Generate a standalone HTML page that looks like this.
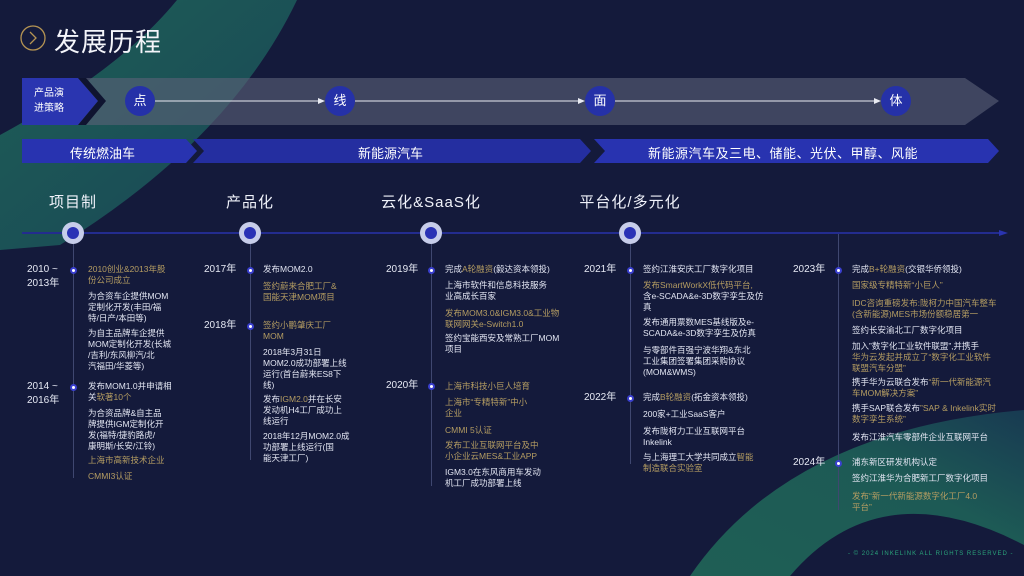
<!DOCTYPE html>
<html><head><meta charset="utf-8"><style>
*{margin:0;padding:0;box-sizing:border-box}
body{width:1024px;height:576px;overflow:hidden;background:#141a3b;font-family:"Liberation Sans","Noto Sans CJK SC",sans-serif;color:#e6e9f4;position:relative}
.a{position:absolute}
.t{position:absolute;font-size:8.5px;line-height:11px;color:#e2e5f2;white-space:nowrap}
.g{color:#b59d62}
.yr{position:absolute;font-size:10px;line-height:14px;color:#e6e9f4}
.dot{position:absolute;width:7px;height:7px;border-radius:50%;background:#fff;border:2px solid #3a3fcf}
.vl{position:absolute;width:1px;background:#3f4770}
.hd{position:absolute;top:191px;font-size:15px;color:#f0f2fa;transform:translateX(-50%);white-space:nowrap;letter-spacing:1px}
.cir{position:absolute;top:222px;width:22px;height:22px;border-radius:50%;background:#c7cdea;transform:translateX(-50%)}
.cir:after{content:"";position:absolute;left:5px;top:5px;width:12px;height:12px;border-radius:50%;background:#2a32b5}
.pc{position:absolute;top:86px;width:30px;height:30px;border-radius:50%;background:#2531a8;color:#fff;font-size:13px;text-align:center;line-height:30px;transform:translateX(-50%)}
</style></head><body>
<svg class="a" style="left:0;top:0" width="1024" height="576">
<defs>
<linearGradient id="g1" x1="0" y1="0" x2="1" y2="1"><stop offset="0" stop-color="#1f6b5c"/><stop offset="1" stop-color="#1a4c5a"/></linearGradient>
<linearGradient id="g2" x1="0" y1="1" x2="1" y2="0"><stop offset="0" stop-color="#1f5f55"/><stop offset="0.6" stop-color="#1d5a55"/><stop offset="1" stop-color="#183a52"/></linearGradient>
</defs>
<path d="M177,0 L297,0 Q230,140 60,245 L0,250 L0,135 Q120,70 177,0 Z" fill="url(#g1)" opacity="0.85"/>
<path d="M690,576 Q790,430 1024,410 L1024,576 Z" fill="url(#g2)"/>
<path d="M790,576 Q880,470 1024,545 L1024,576 Z" fill="#141a3b"/>
<path d="M22,78 L965,78 L999,101 L965,125 L22,125 Z" fill="#5a6178" opacity="0.62"/>
<path d="M22,78 L78,78 L98,101 L78,125 L22,125 Z" fill="#2a35b0"/>
<path d="M78,78 L86,78 L106,101 L86,125 L78,125 L98,101 Z" fill="#0f1430"/>
<g stroke="#e8eaf2" stroke-width="1"><line x1="155" y1="101" x2="320" y2="101"/><line x1="355" y1="101" x2="580" y2="101"/><line x1="615" y1="101" x2="876" y2="101"/></g>
<g fill="#e8eaf2"><path d="M325,101 L318,98 L318,104Z"/><path d="M585,101 L578,98 L578,104Z"/><path d="M881,101 L874,98 L874,104Z"/></g>
<path d="M22,139 L186,139 L197,151 L186,163 L22,163 Z" fill="#2833b0"/>
<path d="M193,139 L580,139 L591,151 L580,163 L193,163 L204,151 Z" fill="#242ea0"/>
<path d="M594,139 L988,139 L999,151 L988,163 L594,163 L605,151 Z" fill="#2833b0"/>
<line x1="22" y1="233" x2="1000" y2="233" stroke="#232c8f" stroke-width="2"/>
<path d="M1008,233 L999,230 L999,236Z" fill="#2a34b0"/>
<circle cx="33" cy="38" r="12" fill="none" stroke="#b59453" stroke-width="1.3"/>
<path d="M30,32 L36,38 L30,44" fill="none" stroke="#b59453" stroke-width="1.3"/>
</svg>
<div class="a" style="left:54px;top:22px;font-size:26px;color:#f4f5fa;letter-spacing:1px">发展历程</div>
<div class="a" style="left:34px;top:86px;font-size:10px;line-height:15px;color:#fff">产品演<br>进策略</div>
<div class="pc" style="left:140px">点</div><div class="pc" style="left:340px">线</div><div class="pc" style="left:600px">面</div><div class="pc" style="left:896px">体</div>
<div class="a" style="left:70px;top:143px;font-size:13px;color:#fff">传统燃油车</div>
<div class="a" style="left:358px;top:143px;font-size:13px;color:#fff">新能源汽车</div>
<div class="a" style="left:648px;top:143px;font-size:13px;color:#fff;letter-spacing:0.5px">新能源汽车及三电、储能、光伏、甲醇、风能</div>
<div class="hd" style="left:73px">项目制</div><div class="hd" style="left:250px">产品化</div><div class="hd" style="left:431px">云化&amp;SaaS化</div><div class="hd" style="left:630px">平台化/多元化</div>
<div class="vl" style="left:73px;top:244px;height:234px"></div>
<div class="vl" style="left:250px;top:244px;height:216px"></div>
<div class="vl" style="left:431px;top:244px;height:242px"></div>
<div class="vl" style="left:630px;top:244px;height:220px"></div>
<div class="vl" style="left:838px;top:234px;height:276px"></div>
<div class="cir" style="left:73px"></div><div class="cir" style="left:250px"></div><div class="cir" style="left:431px"></div><div class="cir" style="left:630px"></div>

<div class="yr" style="left:27px;top:263px">2010 ~<br>2013年</div><div class="dot" style="left:70px;top:267px"></div>
<div class="t g" style="left:88px;top:264px">2010创业&amp;2013年股<br>份公司成立</div>
<div class="t" style="left:88px;top:291px">为合资车企提供MOM<br>定制化开发(丰田/福<br>特/日产/本田等)</div>
<div class="t" style="left:88px;top:328px">为自主品牌车企提供<br>MOM定制化开发(长城<br>/吉利/东风柳汽/北<br>汽福田/华菱等)</div>
<div class="yr" style="left:27px;top:380px">2014 ~<br>2016年</div><div class="dot" style="left:70px;top:384px"></div>
<div class="t" style="left:88px;top:381px">发布MOM1.0并申请相<br>关<span class="g">软著10个</span></div>
<div class="t" style="left:88px;top:408px">为合资品牌&amp;自主品<br>牌提供IGM定制化开<br>发(福特/捷豹路虎/<br>康明斯/长安/江铃)</div>
<div class="t g" style="left:88px;top:455px">上海市高新技术企业</div>
<div class="t g" style="left:88px;top:471px">CMMI3认证</div>

<div class="yr" style="left:204px;top:263px">2017年</div><div class="dot" style="left:247px;top:267px"></div>
<div class="t" style="left:263px;top:264px">发布MOM2.0</div>
<div class="t g" style="left:263px;top:281px">签约蔚来合肥工厂&amp;<br>国能天津MOM项目</div>
<div class="yr" style="left:204px;top:319px">2018年</div><div class="dot" style="left:247px;top:323px"></div>
<div class="t g" style="left:263px;top:320px">签约小鹏肇庆工厂<br>MOM</div>
<div class="t" style="left:263px;top:347px">2018年3月31日<br>MOM2.0成功部署上线<br>运行(首台蔚来ES8下<br>线)</div>
<div class="t" style="left:263px;top:394px">发布<span class="g">IGM2.0</span>并在长安<br>发动机H4工厂成功上<br>线运行</div>
<div class="t" style="left:263px;top:431px">2018年12月MOM2.0成<br>功部署上线运行(国<br>能天津工厂)</div>

<div class="yr" style="left:386px;top:263px">2019年</div><div class="dot" style="left:428px;top:267px"></div>
<div class="t" style="left:445px;top:264px">完成<span class="g">A轮融资</span>(毅达资本领投)</div>
<div class="t" style="left:445px;top:280px">上海市软件和信息科技服务<br>业高成长百家</div>
<div class="t g" style="left:445px;top:308px">发布MOM3.0&amp;IGM3.0&amp;工业物<br>联网网关e-Switch1.0</div>
<div class="t" style="left:445px;top:333px">签约宝能西安及常熟工厂MOM<br>项目</div>
<div class="yr" style="left:386px;top:379px">2020年</div><div class="dot" style="left:428px;top:383px"></div>
<div class="t g" style="left:445px;top:381px">上海市科技小巨人培育</div>
<div class="t g" style="left:445px;top:397px">上海市“专精特新”中小<br>企业</div>
<div class="t g" style="left:445px;top:425px">CMMI 5认证</div>
<div class="t g" style="left:445px;top:440px">发布工业互联网平台及中<br>小企业云MES&amp;工业APP</div>
<div class="t" style="left:445px;top:467px">IGM3.0在东风商用车发动<br>机工厂成功部署上线</div>

<div class="yr" style="left:584px;top:263px">2021年</div><div class="dot" style="left:627px;top:267px"></div>
<div class="t" style="left:643px;top:264px">签约江淮安庆工厂数字化项目</div>
<div class="t" style="left:643px;top:280px"><span class="g">发布SmartWorkX低代码平台,</span><br>含e-SCADA&amp;e-3D数字孪生及仿<br>真</div>
<div class="t" style="left:643px;top:317px">发布通用票数MES基线版及e-<br>SCADA&amp;e-3D数字孪生及仿真</div>
<div class="t" style="left:643px;top:345px">与零部件百强宁波华翔&amp;东北<br>工业集团签署集团采购协议<br>(MOM&amp;WMS)</div>
<div class="yr" style="left:584px;top:391px">2022年</div><div class="dot" style="left:627px;top:395px"></div>
<div class="t" style="left:643px;top:392px">完成<span class="g">B轮融资</span>(拓金资本领投)</div>
<div class="t" style="left:643px;top:409px">200家+工业SaaS客户</div>
<div class="t" style="left:643px;top:426px">发布陇柯力工业互联网平台<br>Inkelink</div>
<div class="t" style="left:643px;top:452px">与上海理工大学共同成立<span class="g">智能</span><br><span class="g">制造联合实验室</span></div>

<div class="yr" style="left:793px;top:263px">2023年</div><div class="dot" style="left:835px;top:267px"></div>
<div class="t" style="left:852px;top:264px">完成<span class="g">B+轮融资</span>(交银华侨领投)</div>
<div class="t g" style="left:852px;top:280px">国家级专精特新“小巨人”</div>
<div class="t g" style="left:852px;top:298px">IDC咨询重磅发布:陇柯力中国汽车整车<br>(含新能源)MES市场份额稳居第一</div>
<div class="t" style="left:852px;top:325px">签约长安渝北工厂数字化项目</div>
<div class="t" style="left:852px;top:341px">加入”数字化工业软件联盟”,并携手<br><span class="g">华为云发起并成立了“数字化工业软件<br>联盟汽车分盟”</span></div>
<div class="t" style="left:852px;top:377px">携手华为云联合发布<span class="g">“新一代新能源汽<br>车MOM解决方案”</span></div>
<div class="t" style="left:852px;top:403px">携手SAP联合发布<span class="g">”SAP &amp; Inkelink实时<br>数字孪生系统”</span></div>
<div class="t" style="left:852px;top:432px">发布江淮汽车零部件企业互联网平台</div>
<div class="yr" style="left:793px;top:456px">2024年</div><div class="dot" style="left:835px;top:460px"></div>
<div class="t" style="left:852px;top:457px">浦东新区研发机构认定</div>
<div class="t" style="left:852px;top:473px">签约江淮华为合肥新工厂数字化项目</div>
<div class="t g" style="left:852px;top:491px">发布“新一代新能源数字化工厂4.0<br>平台”</div>
<div class="a" style="left:848px;top:551px;font-size:6px;letter-spacing:1px;color:#2aa27a;white-space:nowrap">- © 2024 INKELINK ALL RIGHTS RESERVED -</div>
</body></html>
